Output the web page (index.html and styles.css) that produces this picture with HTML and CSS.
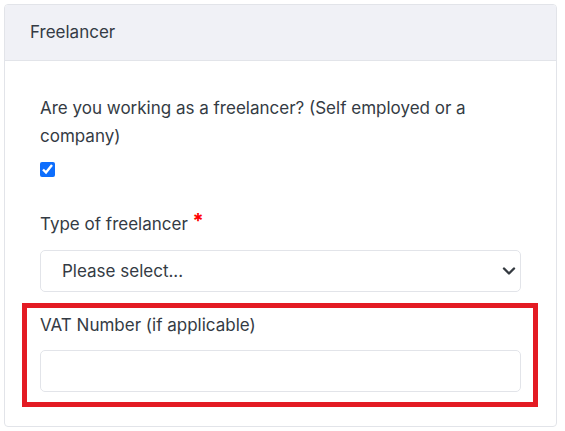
FILE: index.html
```html
<!DOCTYPE html>
<html lang="en">
<head>
<meta charset="utf-8">
<title>Freelancer</title>
<link rel="stylesheet" href="styles.css">
</head>
<body>
<div class="card">
  <div class="card-header">Freelancer</div>
  <div class="card-body">
    <div class="question">Are you working as a freelancer? (Self employed or a company)</div>
    <input class="check" type="checkbox" checked>
    <label class="label type-label">Type of freelancer <span class="req">*</span></label>
    <div class="select-wrap">
      <select class="select">
        <option>Please select...</option>
      </select>
      <svg class="chevron" width="14" height="10" viewBox="0 0 14 10"><path d="M2 2.5 L7 7.5 L12 2.5" fill="none" stroke="#343a40" stroke-width="2.4" stroke-linecap="round" stroke-linejoin="round"/></svg>
    </div>
    <div class="vat-group">
      <label class="label">VAT Number (if applicable)</label>
      <input class="input" type="text">
    </div>
  </div>
</div>
</body>
</html>
```
FILE: styles.css
```css
* { box-sizing: border-box; }
html, body { background: #ffffff; }
body {
  margin: 4px 8px 4px 4px;
  font-family: Inter, Roboto, "Liberation Sans", Arial, sans-serif;
  font-size: 17px;
  color: #343b44;
}
.card {
  width: 553px;
  border: 1px solid #e2e4e9;
  border-radius: 4px;
  overflow: hidden;
}
.card-header {
  background: #f0f1f6;
  border-bottom: 1px solid #e2e4e9;
  padding: 15px 25px;
  line-height: 24px;
  height: 56px;
}
.card-body {
  padding: 33px 35px 34px 35px;
  display: flex;
  flex-direction: column;
  align-items: flex-start;
}
.question {
  line-height: 28px;
}
.check {
  width: 15px;
  height: 15px;
  margin: 12px 0 0 0;
  accent-color: #0d6efd;
}
.label {
  display: block;
  line-height: 28px;
}
.type-label {
  margin-top: 30px;
}
.req {
  color: #ff0000;
  font-weight: 700;
  font-size: 20px;
  vertical-align: 2px;
}
.select-wrap {
  position: relative;
  width: 100%;
  margin-top: 12px;
}
.select {
  width: 100%;
  height: 42px;
  appearance: none;
  -webkit-appearance: none;
  border: 1px solid #e2e4e9;
  border-radius: 5px;
  background: #ffffff;
  padding: 0 40px 0 21px;
  font-family: inherit;
  font-size: 17px;
  color: #343b44;
  display: block;
}
.chevron {
  position: absolute;
  right: 5px;
  top: 16px;
}
.vat-group {
  position: relative;
  width: 100%;
  margin-top: 19px;
}
.vat-group::after {
  content: "";
  position: absolute;
  top: -8px;
  left: -18px;
  right: -17px;
  bottom: -15px;
  border: 5px solid #e31b23;
  pointer-events: none;
}
.input {
  display: block;
  width: 100%;
  height: 42px;
  margin-top: 11px;
  border: 1px solid #e2e4e9;
  border-radius: 5px;
  background: #ffffff;
}
```
